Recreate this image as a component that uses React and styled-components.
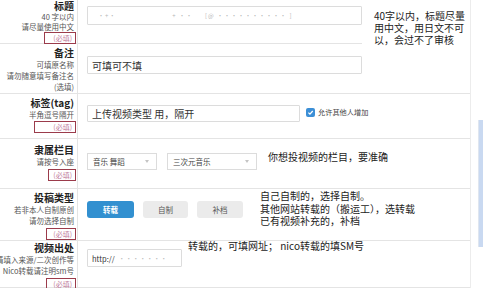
import React from 'react'
import styled, { createGlobalStyle } from 'styled-components'

const GlobalStyle = createGlobalStyle`
  html, body {
    margin: 0;
    padding: 0;
    background: #fff;
    overflow: hidden;
  }
  body {
    font-family: "Noto Sans CJK SC", "Noto Sans", sans-serif;
    color: #333;
  }
`

const Page = styled.div`
  display: flex;
  width: 483px;
  height: 288px;
`

const Form = styled.div`
  width: 471px;
  box-sizing: border-box;
  border-right: 1px solid #ececec;
`

const Side = styled.div`
  flex: 1;
  display: flex;
  justify-content: flex-end;
  padding-top: 120px;
`

const ScrollBar = styled.div`
  width: 4px;
  height: 127px;
  background: #c9d9f1;
  border-left: 1px solid #dfe6f0;
`

const Row = styled.div`
  display: grid;
  grid-template-columns: 78px 1fr;
  height: ${p => p.h}px;
  box-sizing: border-box;
  border-bottom: 1px solid #e4e4e4;
`

const Label = styled.div`
  display: flex;
  flex-direction: column;
  align-items: flex-end;
  padding: ${p => p.pt}px 3px 0 0;
  border-right: 1px solid #e4e4e4;
  text-align: right;
  min-width: 0;
`

const Title = styled.div`
  font-size: 10px;
  font-weight: 700;
  line-height: 12px;
  color: #222;
  white-space: nowrap;
`

const Hint = styled.div`
  font-size: 7.5px;
  line-height: ${p => p.lh || 10}px;
  color: #555;
  white-space: nowrap;
`

const Required = styled.span`
  margin-top: ${p => p.mt || 0}px;
  margin-right: -2px;
  padding: 0 3px 0 ${p => p.pl || 6}px;
  border: 1px solid #9b3b4b;
  font-size: 7px;
  line-height: 10px;
  color: #c07a9a;
  white-space: nowrap;
`

const Field = styled.div`
  display: flex;
  align-items: flex-start;
  padding: ${p => p.pt || 0}px 0 0 9px;
  min-width: 0;
`

const TextBox = styled.div`
  display: flex;
  align-items: center;
  flex-shrink: 0;
  width: ${p => p.w}px;
  height: ${p => p.h || 18}px;
  margin-top: ${p => p.mt || 0}px;
  padding-left: 4px;
  box-sizing: border-box;
  border: 1px solid #dcdcdc;
  border-radius: 1px;
  font-size: ${p => p.fs || 10}px;
  color: #333;
  white-space: nowrap;
  overflow: hidden;
`

const Faint = styled.span`
  margin-left: ${p => p.ml || 0}px;
  font-size: 6px;
  color: #b8b8b8;
  letter-spacing: 1px;
`

const Note = styled.div`
  margin: ${p => p.mt || 0}px 0 0 ${p => p.ml || 0}px;
  font-size: 10px;
  line-height: ${p => p.lh || 12}px;
  color: #222;
  white-space: nowrap;
`

const CoverNote = styled(Note)`
  align-self: stretch;
  margin-bottom: -1px;
  padding: 4px 0 0 12px;
  background: #fff;
  flex: 1;
`

const Check = styled.span`
  display: inline-flex;
  align-items: center;
  justify-content: center;
  width: 9px;
  height: 9px;
  margin: 3px 0 0 6px;
  border-radius: 2px;
  background: #3c8fd6;
  flex-shrink: 0;
`

const CheckLabel = styled.span`
  margin: 3px 0 0 3px;
  font-size: 7.2px;
  line-height: 9px;
  color: #444;
  white-space: nowrap;
`

const Select = styled.div`
  display: flex;
  align-items: center;
  justify-content: space-between;
  width: ${p => p.w}px;
  height: 17px;
  margin-right: 10px;
  padding: 0 7px 0 5px;
  box-sizing: border-box;
  border: 1px solid #dcdcdc;
  font-size: 7.5px;
  color: #444;
  white-space: nowrap;
`

const Caret = styled.span`
  width: 0;
  height: 0;
  border-left: 2.5px solid transparent;
  border-right: 2.5px solid transparent;
  border-top: 3px solid #c4c4c4;
`

const Buttons = styled.div`
  display: flex;
  gap: 9px;
  margin-top: 11px;
`

const TypeButton = styled.div`
  display: flex;
  align-items: center;
  justify-content: center;
  width: ${p => p.w}px;
  height: 17px;
  border-radius: 3px;
  background: ${p => (p.active ? '#3290d0' : '#ebebeb')};
  color: ${p => (p.active ? '#fff' : '#555')};
  font-size: 7.5px;
  font-weight: ${p => (p.active ? 700 : 400)};
`

export default function App() {
  return (
    <Page>
      <GlobalStyle />
      <Form>
        <Row h={44}>
          <Label pt={0}>
            <Title>标题</Title>
            <Hint>40 字以内</Hint>
            <Hint>请尽量使用中文</Hint>
            <Required mt={0} pl={8}>(必填)</Required>
          </Label>
          <Field pt={6}>
            <TextBox w={275} h={19}>
              <Faint ml={6}>·+·</Faint>
              <Faint ml={56}>+ ··</Faint>
              <Faint ml={12}>[@ ·········· ]</Faint>
            </TextBox>
            <CoverNote>
              40字以内，标题尽量
              <br />
              用中文，用日文不可
              <br />
              以，会过不了审核
            </CoverNote>
          </Field>
        </Row>

        <Row h={50}>
          <Label pt={3}>
            <Title>备注</Title>
            <Hint lh={11}>可填原名称</Hint>
            <Hint lh={11}>请勿随意填写备注名</Hint>
            <Hint lh={11}>(选填)</Hint>
          </Label>
          <Field pt={12}>
            <TextBox w={275}>可填可不填</TextBox>
          </Field>
        </Row>

        <Row h={45}>
          <Label pt={3}>
            <Title>标签(tag)</Title>
            <Hint lh={12}>半角逗号隔开</Hint>
            <Required pl={18}>(必填)</Required>
          </Label>
          <Field pt={11}>
            <TextBox w={213} h={17}>上传视频类型 用，隔开</TextBox>
            <Check>
              <svg width="7" height="7" viewBox="0 0 10 10">
                <path d="M2 5.2 L4.2 7.3 L8.2 2.8" fill="none" stroke="#fff" strokeWidth="1.8" />
              </svg>
            </Check>
            <CheckLabel>允许其他人增加</CheckLabel>
          </Field>
        </Row>

        <Row h={50}>
          <Label pt={5}>
            <Title>隶属栏目</Title>
            <Hint lh={11}>请按号入座</Hint>
            <Required mt={2} pl={4}>(必填)</Required>
          </Label>
          <Field pt={14}>
            <Select w={70}>
              音乐 舞蹈<Caret />
            </Select>
            <Select w={90}>
              三次元音乐<Caret />
            </Select>
            <Note mt={-2} ml={1}>你想投视频的栏目，要准确</Note>
          </Field>
        </Row>

        <Row h={52}>
          <Label pt={3}>
            <Title>投稿类型</Title>
            <Hint lh={11}>若非本人自制原创</Hint>
            <Hint lh={11}>请勿选择自制</Hint>
            <Required mt={2} pl={6}>(必填)</Required>
          </Label>
          <Field pt={1}>
            <Buttons>
              <TypeButton w={47} active>转载</TypeButton>
              <TypeButton w={45}>自制</TypeButton>
              <TypeButton w={46}>补档</TypeButton>
            </Buttons>
            <Note ml={17} lh={12.5}>
              自己自制的，选择自制。
              <br />
              其他网站转载的（搬运工），选转载
              <br />
              已有视频补充的，补档
            </Note>
          </Field>
        </Row>

        <Row h={47}>
          <Label pt={1}>
            <Title>视频出处</Title>
            <Hint lh={11}>请填入来源/二次创作等</Hint>
            <Hint lh={11}>Nico转载请注明sm号</Hint>
            <Required mt={2} pl={6}>(必填)</Required>
          </Label>
          <Field>
            <TextBox w={95} mt={8} fs={7.5}>
              http://
              <Faint ml={4}>·······</Faint>
            </TextBox>
            <Note ml={6} lh={10}>转载的，可填网址； nico转载的填SM号</Note>
          </Field>
        </Row>
      </Form>
      <Side>
        <ScrollBar />
      </Side>
    </Page>
  )
}
